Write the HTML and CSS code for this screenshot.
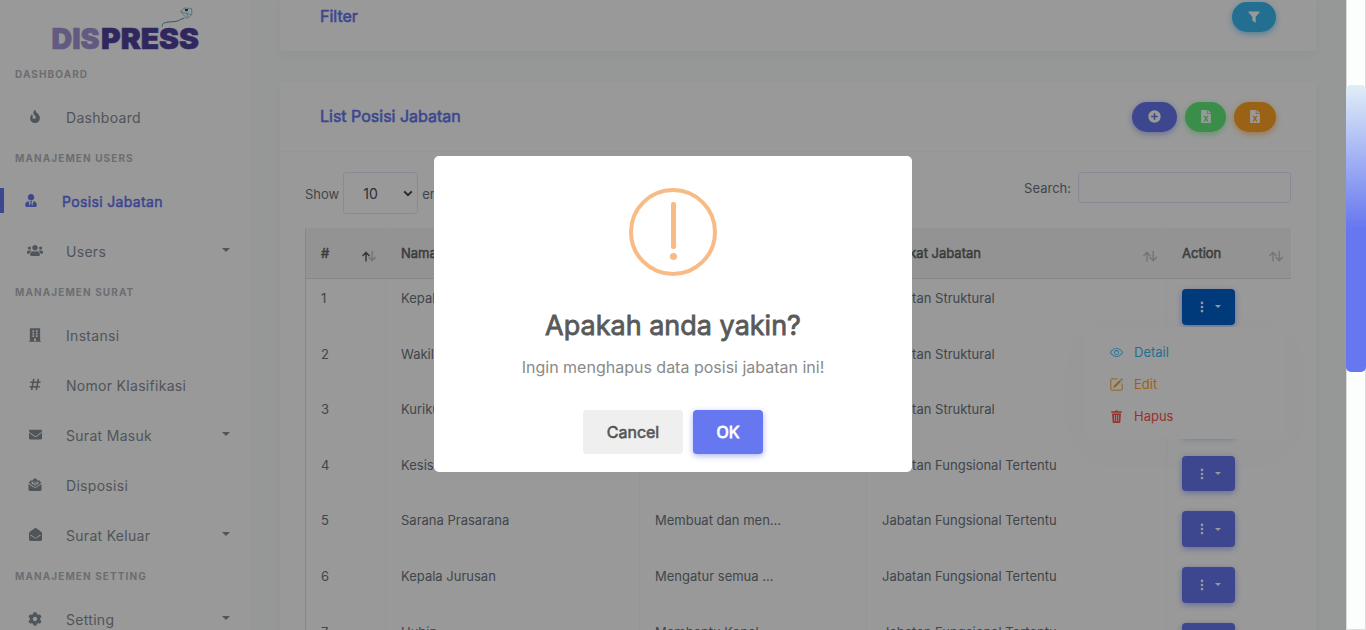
FILE: index.html
```html
<!DOCTYPE html>
<html lang="id">
<head>
<meta charset="utf-8">
<title>Posisi Jabatan</title>
<link rel="stylesheet" href="styles.css">
</head>
<body>
<svg class="defs" width="0" height="0">
  <symbol id="sort" viewBox="0 0 16 14"><path class="up" d="M5 12.500V3.500M1.500 7L5 3.300l3.500 3.700"/><path class="down" d="M11.200 2v9M7.700 8l3.500 3.600L14.700 8"/></symbol>
  <symbol id="excel" viewBox="0 0 384 512"><path fill-rule="evenodd" d="M224 136V0H24C10.700 0 0 10.700 0 24v464c0 13.300 10.700 24 24 24h336c13.300 0 24-10.700 24-24V160H248c-13.200 0-24-10.800-24-24zM88 224h62l42 68 42-68h62l-72 112 72 112h-62l-42-68-42 68H88l72-112zM384 122v6H256V0h6c6 0 12 3 17 7l98 98c4 4 7 10 7 17z"/></symbol>
  <symbol id="dots" viewBox="0 0 4 12"><circle cx="2" cy="1.900" r="1.300"/><circle cx="2" cy="6" r="1.300"/><circle cx="2" cy="10.100" r="1.300"/></symbol>
</svg>
<div class="app">
  <aside class="sidebar">
    <div class="brand">
      <svg width="150" height="58" viewBox="0 0 150 58">
        <text x="0.500" y="48.500" class="logo logo-light" textLength="48" lengthAdjust="spacingAndGlyphs">DIS</text>
        <text x="50" y="48.500" class="logo logo-dark" textLength="98" lengthAdjust="spacingAndGlyphs">PRESS</text>
        <path d="M111.500 26.500c-1-3 2-4 6-4.500s9 0 12-2.500l4-1.500" fill="none" stroke="#2f8f93" stroke-width=".9"/>
        <path d="M129.500 11.500l4-3.500 7 .5.5 6-5 4zM129.500 11.500l7 2.500 4.500.5M133.500 8l3 6-.5 4.500" fill="none" stroke="#6fc4cf" stroke-width=".8"/>
        <path d="M134 9h3v2h-3z" fill="#3a3f94"/>
      </svg>
    </div>
    <div class="menu-header">DASHBOARD</div>
    <div class="item"><span class="ico"><svg width="10" height="13" viewBox="0 0 384 512"><path d="M216 23.860c0-23.800-30.650-32.770-44.150-13.040C48 191.850 224 200 224 288c0 35.630-29.110 64.460-64.850 63.990-35.170-.45-63.150-29.770-63.150-64.940v-85.510c0-21.700-26.470-32.230-41.430-16.500C27.800 213.160 0 261.330 0 320c0 105.870 86.130 192 192 192s192-86.130 192-192c0-170.290-168-193-168-296.140z"/></svg></span>Dashboard</div>
    <div class="menu-header">MANAJEMEN USERS</div>
    <div class="item active"><span class="ico"><svg width="12" height="13" viewBox="0 0 448 512"><path d="M224 256c70.700 0 128-57.300 128-128S294.700 0 224 0 96 57.300 96 128s57.300 128 128 128zm95.800 32.600L272 480l-32-136 32-56h-96l32 56-32 136-47.800-191.400C56.900 292 0 350.300 0 422.400V464c0 26.500 21.500 48 48 48h352c26.500 0 48-21.500 48-48v-41.600c0-72.100-56.900-130.400-128.200-133.800z"/></svg></span>Posisi Jabatan</div>
    <div class="item"><span class="ico"><svg width="16" height="13" viewBox="0 0 640 512"><path d="M96 224c35.300 0 64-28.700 64-64s-28.700-64-64-64-64 28.700-64 64 28.700 64 64 64zm448 0c35.300 0 64-28.700 64-64s-28.700-64-64-64-64 28.700-64 64 28.700 64 64 64zm32 32h-64c-17.600 0-33.500 7.100-45.100 18.600 40.300 22.100 68.900 62 75.100 109.400h66c17.700 0 32-14.300 32-32v-32c0-35.300-28.700-64-64-64zm-256 0c61.900 0 112-50.100 112-112S381.900 32 320 32 208 82.100 208 144s50.100 112 112 112zm76.800 32h-8.300c-20.800 10-43.900 16-68.500 16s-47.600-6-68.500-16h-8.300C179.600 288 128 339.600 128 403.200V432c0 26.500 21.500 48 48 48h288c26.500 0 48-21.500 48-48v-28.800c0-63.600-51.600-115.200-115.200-115.200zm-223.700-13.400C161.500 263.100 145.600 256 128 256H64c-35.300 0-64 28.700-64 64v32c0 17.700 14.300 32 32 32h65.900c6.300-47.400 34.900-87.300 75.200-109.400z"/></svg></span>Users<i class="caret"></i></div>
    <div class="menu-header">MANAJEMEN SURAT</div>
    <div class="item"><span class="ico"><svg width="12" height="14" viewBox="0 0 448 512"><path fill-rule="evenodd" d="M436 480h-20V24c0-13-11-24-24-24H56C43 0 32 11 32 24v456H12c-7 0-12 5-12 12v20h448v-20c0-7-5-12-12-12zM128 76h64v64h-64zm128 0h64v64h-64zM128 172h64v64h-64zm128 0h64v64h-64zM128 268h64v64h-64zm128 0h64v64h-64zM188 384h72v96h-72z"/></svg></span>Instansi</div>
    <div class="item"><span class="ico"><svg width="12" height="13" viewBox="0 0 12 13"><path d="M4.800 .8L2.600 12.200M9.400 .8L7.200 12.200M1.200 4.200H11.500M.5 8.800H10.800" fill="none" stroke="#868e96" stroke-width="1.600"/></svg></span>Nomor Klasifikasi</div>
    <div class="item"><span class="ico"><svg width="13" height="13" viewBox="0 0 512 512"><path d="M502.300 190.800c3.900-3.100 9.700-.2 9.700 4.700V400c0 26.500-21.500 48-48 48H48c-26.500 0-48-21.500-48-48V195.600c0-5 5.700-7.800 9.700-4.700 22.400 17.400 52.100 39.500 154.100 113.600 21.100 15.400 56.700 47.800 92.200 47.600 35.700.3 72-32.800 92.300-47.600 102-74.100 131.600-96.300 154-113.700zM256 320c23.200.4 56.600-29.200 73.400-41.400 132.700-96.300 142.800-104.700 173.400-128.700 5.800-4.500 9.200-11.500 9.200-18.900v-19c0-26.500-21.500-48-48-48H48c-26.500 0-48 21.500-48 48v19c0 7.400 3.400 14.300 9.200 18.900 30.600 23.900 40.700 32.400 173.400 128.700 16.800 12.200 50.200 41.800 73.400 41.400z"/></svg></span>Surat Masuk<i class="caret"></i></div>
    <div class="item"><span class="ico"><svg width="14" height="13" viewBox="0 0 512 512"><path fill-rule="evenodd" d="M0 232l170 124c50 38 122 38 172 0l170-124v232c0 26-22 48-48 48H48c-26 0-48-22-48-48zM64 96h92L210 32c30-30 62-30 92 0l54 64h92v44l64 50-62 50-134 96c-36 28-84 28-120 0L64 240 0 190l64-50zm56 56v66l96 70c24 18 56 18 80 0l96-70v-66zM176 168h160v32H176zm0 56h160v32H176z"/></svg></span>Disposisi</div>
    <div class="item"><span class="ico"><svg width="13" height="13" viewBox="0 0 512 512"><path d="M512 464c0 26.510-21.490 48-48 48H48c-26.510 0-48-21.490-48-48V200.724a48 48 0 0 1 18.387-37.776c24.913-19.529 45.501-35.365 164.200-121.511C199.412 29.170 232.797-.347 256 .003c23.198-.354 56.596 29.172 73.413 41.433 118.687 86.137 139.303 101.995 164.200 121.512A48 48 0 0 1 512 200.724V464zm-65.666-196.605c-2.563-3.728-7.700-4.595-11.339-1.907-22.845 16.873-55.462 40.705-105.582 77.079-16.825 12.266-50.210 41.781-73.413 41.430-23.211.344-56.559-29.143-73.413-41.430-50.114-36.370-82.734-60.204-105.582-77.079-3.639-2.688-8.776-1.821-11.339 1.907l-9.072 13.196a7.998 7.998 0 0 0 1.839 10.967c22.887 16.899 55.454 40.690 105.303 76.868 20.274 14.781 56.524 47.813 92.264 47.573 35.724.242 71.961-32.771 92.263-47.573 49.850-36.179 82.418-59.970 105.303-76.868a7.998 7.998 0 0 0 1.839-10.967l-9.071-13.196z"/></svg></span>Surat Keluar<i class="caret"></i></div>
    <div class="menu-header">MANAJEMEN SETTING</div>
    <div class="item"><span class="ico"><svg width="14" height="14" viewBox="0 0 512 512"><path d="M487.400 315.700l-42.600-24.600c4.300-23.200 4.300-47 0-70.200l42.600-24.600c4.900-2.800 7.100-8.600 5.500-14-11.100-35.600-30-67.800-54.700-94.600-3.800-4.100-10-5.100-14.800-2.300L380.800 110c-17.900-15.400-38.500-27.300-60.800-35.100V25.800c0-5.600-3.900-10.500-9.400-11.700-36.700-8.200-74.300-7.800-109.200 0-5.500 1.200-9.400 6.100-9.400 11.700V75c-22.200 7.900-42.800 19.800-60.800 35.100L88.700 85.500c-4.900-2.800-11-1.900-14.800 2.300-24.700 26.700-43.600 58.900-54.700 94.600-1.700 5.400.6 11.200 5.500 14L67.300 221c-4.300 23.200-4.300 47 0 70.200l-42.600 24.600c-4.900 2.800-7.100 8.600-5.500 14 11.100 35.600 30 67.800 54.700 94.600 3.800 4.100 10 5.100 14.800 2.300l42.600-24.600c17.900 15.400 38.500 27.300 60.800 35.100v49.200c0 5.600 3.900 10.500 9.400 11.700 36.700 8.200 74.300 7.800 109.200 0 5.500-1.200 9.400-6.100 9.400-11.700v-49.200c22.200-7.900 42.800-19.800 60.800-35.100l42.600 24.600c4.900 2.800 11 1.900 14.800-2.300 24.700-26.700 43.600-58.900 54.700-94.600 1.500-5.500-.7-11.300-5.600-14.100zM256 336c-44.100 0-80-35.900-80-80s35.900-80 80-80 80 35.900 80 80-35.900 80-80 80z"/></svg></span>Setting<i class="caret"></i></div>
  </aside>
  <main class="content">
    <section class="card filter-card">
      <h4>Filter</h4>
      <button class="pill info"><svg width="12" height="12" viewBox="0 0 12 12"><path d="M1 .5h10c.6 0 .8.600.4 1L7.700 5.800v5.400c0 .4-.4.500-.7.300L4.700 9.800c-.2-.1-.4-.4-.4-.6V5.800L.6 1.500C.2 1.100.4.500 1 .5z"/></svg></button>
    </section>
    <section class="card list-card">
      <header class="card-header">
        <h4>List Posisi Jabatan</h4>
        <div class="actions">
          <button class="pill primary"><svg width="13" height="13" viewBox="0 0 13 13"><path fill-rule="evenodd" d="M6.500.3a6.200 6.200 0 1 0 0 12.400 6.200 6.200 0 0 0 0-12.400zM5.700 3.200h1.600v2.500h2.500v1.600H7.300v2.500H5.700V7.300H3.200V5.700h2.500z"/></svg></button>
          <button class="pill success"><svg width="10" height="13"><use href="#excel"/></svg></button>
          <button class="pill warning"><svg width="10" height="13"><use href="#excel"/></svg></button>
        </div>
      </header>
      <div class="toolbar">
        <div class="length"><span class="label">Show</span><span class="select">10<svg width="10" height="7" viewBox="0 0 10 7"><path d="M1.200 1.400L5 5.200l3.800-3.800" fill="none" stroke="#444" stroke-width="2"/></svg></span><span class="label">entries</span></div>
        <div class="search">Search:<span class="input"></span></div>
      </div>
      <div class="table">
        <div class="row head">
          <div>#<svg class="sort asc" width="16" height="14"><use href="#sort"/></svg></div>
          <div>Nama Jabatan<svg class="sort" width="16" height="14"><use href="#sort"/></svg></div>
          <div>Deskripsi<svg class="sort" width="16" height="14"><use href="#sort"/></svg></div>
          <div>Tingkat Jabatan<svg class="sort" width="16" height="14"><use href="#sort"/></svg></div>
          <div>Action<svg class="sort" width="16" height="14"><use href="#sort"/></svg></div>
        </div>
        <div class="row"><div>1</div><div>Kepala Sekolah</div><div></div><div>Jabatan Struktural</div>
          <div><button class="more open"><svg width="4" height="12"><use href="#dots"/></svg><i></i></button>
            <div class="dropdown">
              <a class="t-info"><svg width="13" height="13" viewBox="0 0 16 16"><path fill-rule="evenodd" d="M16 8s-3-5.500-8-5.500S0 8 0 8s3 5.500 8 5.500S16 8 16 8zM1.200 8C2.500 5.900 5 3.500 8 3.500S13.500 5.900 14.800 8C13.500 10.100 11 12.500 8 12.500S2.500 10.100 1.200 8z"/><path fill-rule="evenodd" d="M8 5a3 3 0 1 0 0 6 3 3 0 0 0 0-6zm0 1a2 2 0 1 1 0 4 2 2 0 0 1 0-4z"/></svg>Detail</a>
              <a class="t-warning"><svg width="13" height="13" viewBox="0 0 16 16"><path d="M15.500 1.900a.5.500 0 0 1 0 .7l-1 1-2-2 1-1a.5.500 0 0 1 .7 0zM13.800 4.400l-2-2L4.900 9.200a.5.500 0 0 0-.1.200L4 11.800a.3.300 0 0 0 .3.300l2.400-.8.200-.1z"/><path d="M15 7v7a1 1 0 0 1-1 1H2a1 1 0 0 1-1-1V2a1 1 0 0 1 1-1h7" fill="none" stroke="#ffa426" stroke-width="1.200"/></svg>Edit</a>
              <a class="t-danger"><svg width="13" height="13" viewBox="0 0 16 16"><path fill-rule="evenodd" d="M1.500 1.500h4.500L6.500.5h3l.5 1h4.500v2H1.500zM2.500 4.300h11l-.8 10.700a1 1 0 0 1-1 .9H4.300a1 1 0 0 1-1-.9zM5 6l.4 8h.9L6 6zm2.600 0v8h.9V6zM10 6l-.4 8h.9l.5-8z"/></svg>Hapus</a>
            </div>
          </div></div>
        <div class="row"><div>2</div><div>Wakil Kepala Sekolah</div><div></div><div>Jabatan Struktural</div><div><button class="more"><svg width="4" height="12"><use href="#dots"/></svg><i></i></button></div></div>
        <div class="row"><div>3</div><div>Kurikulum</div><div></div><div>Jabatan Struktural</div><div><button class="more"><svg width="4" height="12"><use href="#dots"/></svg><i></i></button></div></div>
        <div class="row"><div>4</div><div>Kesiswaan</div><div></div><div>Jabatan Fungsional Tertentu</div><div><button class="more"><svg width="4" height="12"><use href="#dots"/></svg><i></i></button></div></div>
        <div class="row"><div>5</div><div>Sarana Prasarana</div><div>Membuat dan men...</div><div>Jabatan Fungsional Tertentu</div><div><button class="more"><svg width="4" height="12"><use href="#dots"/></svg><i></i></button></div></div>
        <div class="row"><div>6</div><div>Kepala Jurusan</div><div>Mengatur semua ...</div><div>Jabatan Fungsional Tertentu</div><div><button class="more"><svg width="4" height="12"><use href="#dots"/></svg><i></i></button></div></div>
        <div class="row"><div>7</div><div>Hubin</div><div>Membantu Kepal...</div><div>Jabatan Fungsional Tertentu</div><div><button class="more"><svg width="4" height="12"><use href="#dots"/></svg><i></i></button></div></div>
      </div>
    </section>
  </main>
</div>
<div class="overlay">
  <div class="modal">
    <svg class="warn" width="88" height="88" viewBox="0 0 88 88"><circle cx="44" cy="44" r="42" fill="none" stroke="#f8bb86" stroke-width="4"/><rect x="42" y="14" width="5" height="47" rx="2" fill="#f8bb86"/><circle cx="44.500" cy="68.500" r="3.600" fill="#f8bb86"/></svg>
    <div class="title">Apakah anda yakin?</div>
    <div class="text">Ingin menghapus data posisi jabatan ini!</div>
    <div class="buttons"><button class="cancel">Cancel</button><button class="ok">OK</button></div>
  </div>
</div>
<div class="scrollbar"><div class="thumb"></div></div>
</body>
</html>
```

FILE: styles.css
```css
* { box-sizing: border-box; }
html, body { margin: 0; height: 630px; overflow: hidden; }
body { font-family: Inter, "Liberation Sans", sans-serif; font-size: 13px; color: #6c757d; background: #f8fdfb; }
button { font: inherit; border: 0; padding: 0; margin: 0; }
svg { display: block; fill: currentColor; flex: none; }
.defs { position: absolute; }
.app { display: flex; width: 1346px; height: 630px; overflow: hidden; }

.sidebar { width: 250px; flex: none; background: #fff; height: 630px; overflow: hidden; color: #868e96; }
.brand { height: 59px; padding-left: 51px; }
.logo { font-family: Inter, sans-serif; font-weight: 900; font-size: 29px; }
.logo-light { fill: #a396d6; stroke: #a396d6; stroke-width: .6; }
.logo-dark { fill: #52429e; stroke: #52429e; stroke-width: .6; }
.menu-header { height: 34px; line-height: 31px; padding-left: 15px; font-size: 10px; font-weight: 700; letter-spacing: 1.1px; color: #b2b8bd; white-space: nowrap; }
.item { height: 50px; display: flex; align-items: center; font-size: 14px; letter-spacing: .3px; padding: 0 20px 2px 0; }
.ico { width: 34px; margin: 0 14px 1px 18px; display: flex; justify-content: center; }
.item.active { color: #6777ef; letter-spacing: .35px; -webkit-text-stroke: .5px #6777ef; background: linear-gradient(#6777ef, #6777ef) 0 11px / 4px 25px no-repeat; }
.item.active .ico { margin: 0 14px 1px 14px; }
.caret { margin: 0 0 2px auto; border: 4px solid transparent; border-top-color: currentColor; border-bottom: 0; }

.content { flex: 1; padding: 0 30px; }
.card { background: #fff; border-radius: 3px; box-shadow: 0 4px 8px rgba(0,0,0,.03); }
h4 { margin: 0 0 2px; font-size: 16px; font-weight: 400; -webkit-text-stroke: .6px #6777ef; color: #6777ef; }
.filter-card { height: 51px; padding: 0 40px 17px; display: flex; align-items: center; justify-content: space-between; }
.list-card { margin-top: 31px; height: 600px; }
.card-header { height: 70px; padding: 0 40px; display: flex; align-items: center; justify-content: space-between; border-bottom: 1px solid #f9f9f9; }
.actions { display: flex; gap: 8px; }
.pill { height: 30px; border-radius: 15px; color: #fff; display: flex; align-items: center; justify-content: center; }
.info { width: 44px; background: #3abaf4; box-shadow: 0 2px 6px #82d3f8; }
.primary { width: 45px; background: #6777ef; box-shadow: 0 2px 6px #acb5f6; }
.success { width: 41px; background: #63ed7a; box-shadow: 0 2px 6px #a8f5b4; }
.warning { width: 42px; background: #ffa426; box-shadow: 0 2px 6px #ffc473; }

.toolbar { height: 76px; padding: 20px 25px 0; display: flex; justify-content: space-between; align-items: flex-start; }
.length { display: flex; align-items: center; gap: 4px; height: 42px; }
.label { padding-top: 2px; }
.select { width: 75px; height: 42px; border: 1px solid #e4e6fc; border-radius: 3px; font-size: 14px; color: #495057; display: flex; align-items: center; justify-content: space-between; padding: 0 4px 0 19px; }
.search { display: flex; align-items: center; gap: 7px; }
.input { width: 213px; height: 31px; border: 1px solid #e4e6fc; border-radius: 3px; }

.table { margin: 0 25px; border-left: 1px solid #dee2e6; }
.row { display: grid; grid-template-columns: 80px 254px 227px 300px 124px; height: 55.6px; }
.row > div { padding: 10px 15px; line-height: 19px; border-right: 1px solid #f8f8f8; position: relative; white-space: nowrap; }
.row > div:last-child { border-right: 0; }
.head { height: 51px; background: #f5f5f5; border-bottom: 1px solid #dee2e6; color: #666; -webkit-text-stroke: .5px #666; }
.head > div { display: flex; align-items: center; justify-content: space-between; padding-right: 8px; }
.head > div:last-child { padding-right: 7px; }
.sort { --up: #c4c4c4; margin-top: 5px; fill: none; stroke: #c4c4c4; stroke-width: 1.5; }
.up { stroke: var(--up); }
.asc { --up: #606060; }
.more { width: 53px; height: 35.6px; border-radius: 4px; background: #6777ef; box-shadow: 0 2px 6px #acb5f6; color: #fff; display: flex; align-items: center; justify-content: center; gap: 11px; padding-left: 3px; }
.more i { border: 3px solid transparent; border-top-color: #fff; border-bottom: 0; }
.more.open { background: #0062cc; }
.dropdown { position: absolute; z-index: 2; right: 6px; top: 48px; width: 200px; height: 112px; padding: 9px 25px; background: #fff; border-radius: 3px; box-shadow: 0 10px 40px rgba(51,73,94,.025); }
.dropdown a { height: 32px; display: flex; align-items: center; gap: 11px; }
.t-info { color: #3abaf4; }
.t-warning { color: #ffa426; }
.t-danger { color: #fc544b; }

.overlay { position: fixed; left: 0; top: 0; width: 1346px; height: 630px; background: rgba(0,0,0,.4); display: flex; align-items: center; justify-content: center; z-index: 5; }
.modal { width: 478px; height: 316px; margin-bottom: 2px; background: #fff; border-radius: 5px; display: flex; flex-direction: column; align-items: center; padding-top: 32px; }
.title { margin-top: 31px; font-size: 27px; line-height: 38px; font-weight: 400; -webkit-text-stroke: .8px #595959; color: #595959; }
.text { margin-top: 12px; font-size: 16px; line-height: 20px; color: #8a8a8a; }
.buttons { margin-top: 33px; display: flex; gap: 10px; }
.buttons button { height: 44px; border-radius: 4px; font-size: 16px; }
.buttons .cancel { width: 100px; background: #efefef; color: #555; -webkit-text-stroke: .6px #555; }
.buttons .ok { width: 70px; background: #6777ef; color: #fff; -webkit-text-stroke: .8px #fff; box-shadow: 0 2px 6px #acb5f6; }

.scrollbar { position: fixed; right: 0; top: 0; width: 20px; height: 630px; background: #fbfefd; border: 1px solid #d9dcdb; border-top: 0; z-index: 6; }
.thumb { margin: 85px -1px 0; height: 287px; border-radius: 5px; background: linear-gradient(#e0eef8 0, #6777ef 50%); }
```
